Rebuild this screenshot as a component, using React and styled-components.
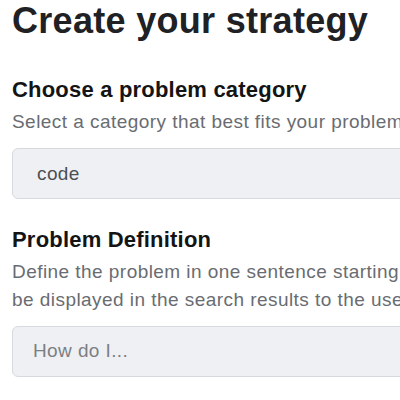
import React from "react";
import styled, { createGlobalStyle } from "styled-components";

const GlobalStyle = createGlobalStyle`
  html, body {
    margin: 0;
    padding: 0;
    background: #ffffff;
    overflow: hidden;
  }
  body {
    font-family: "Liberation Sans", Arial, Helvetica, sans-serif;
    -webkit-font-smoothing: antialiased;
  }
`;

const Page = styled.main`
  display: flex;
  flex-direction: column;
  padding: 1px 0 0 12px;
  width: 440px;
  box-sizing: border-box;
`;

const Title = styled.h1`
  margin: 0;
  font-size: 36px;
  line-height: 39.6px;
  font-weight: 700;
  letter-spacing: 0.3px;
  color: #202124;
  white-space: nowrap;
`;

const Form = styled.form`
  display: flex;
  flex-direction: column;
  gap: 27px;
  margin-top: 35px;
`;

const Field = styled.div`
  display: flex;
  flex-direction: column;
`;

const Label = styled.label`
  font-size: 22px;
  line-height: 28px;
  font-weight: 700;
  letter-spacing: 0.2px;
  color: #141414;
  white-space: nowrap;
`;

const Hint = styled.p`
  margin: 4px 0 0;
  font-size: 19px;
  line-height: 28px;
  letter-spacing: 0.45px;
  color: #696c71;
  white-space: nowrap;
`;

const controlBase = `
  box-sizing: border-box;
  display: block;
  width: 430px;
  height: 51px;
  margin-top: 12px;
  border: 1px solid #d6d9de;
  border-radius: 6px;
  background: #eef0f3;
  font-family: "Liberation Sans", Arial, Helvetica, sans-serif;
  font-size: 19px;
  letter-spacing: 0.4px;
  outline: none;
`;

const Select = styled.select`
  ${controlBase}
  appearance: none;
  -webkit-appearance: none;
  padding: 0 0 0 24px;
  color: #4b4e53;
`;

const TextInput = styled.input`
  ${controlBase}
  padding: 0 0 0 20px;
  color: #333;
  &::placeholder {
    color: #7c7f84;
    opacity: 1;
  }
`;

export default function App() {
  return (
    <>
      <GlobalStyle />
      <Page>
        <Title>Create your strategy</Title>
        <Form>
          <Field>
            <Label htmlFor="category">Choose a problem category</Label>
            <Hint>Select a category that best fits your problem</Hint>
            <Select id="category" defaultValue="code">
              <option value="code">code</option>
            </Select>
          </Field>
          <Field>
            <Label htmlFor="definition">Problem Definition</Label>
            <Hint>
              Define the problem in one sentence starting with "How do I..."
              <br />
              be displayed in the search results to the users.
            </Hint>
            <TextInput id="definition" placeholder="How do I..." />
          </Field>
        </Form>
      </Page>
    </>
  );
}
